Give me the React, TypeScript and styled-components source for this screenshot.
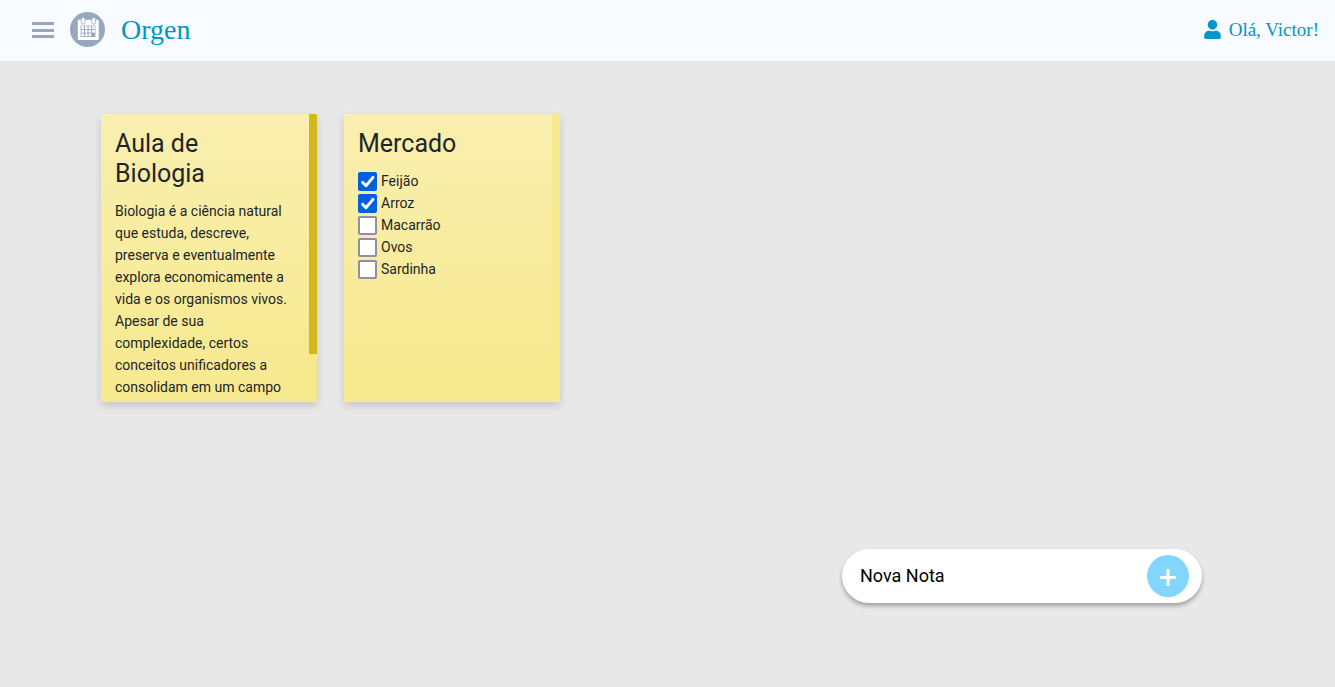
import React, { useEffect, useRef, useState } from "react";
import styled, { createGlobalStyle } from "styled-components";
import { FaUser } from "react-icons/fa";

const GlobalStyle = createGlobalStyle`
  *, *::before, *::after { box-sizing: border-box; }
  body {
    margin: 0;
    background: #e8e8e8;
    color: #212529;
    font-family: Roboto, "Liberation Sans", sans-serif;
    font-size: 14px;
  }
`;

const Page = styled.div`
  display: flex;
  flex-direction: column;
  min-height: 100vh;
`;

const Header = styled.header`
  display: flex;
  align-items: center;
  height: 61px;
  padding: 0 16px 2px 32px;
  background: #f8fbff;
  color: #0096c7;
  font-family: "Liberation Serif", serif;
`;

const MenuButton = styled.button`
  display: flex;
  flex-direction: column;
  justify-content: space-between;
  width: 22px;
  height: 16px;
  margin: 1px 16px 0 0;
  padding: 0;
  border: 0;
  background: none;
  cursor: pointer;
`;

const MenuBar = styled.span`
  height: 3px;
  background: #98a7bc;
`;

const Logo = styled.svg`
  width: 35px;
  height: 35px;
  margin-right: 16px;
`;

const Brand = styled.a`
  display: flex;
  align-items: center;
  color: inherit;
  font-size: 28px;
  line-height: 36px;
  text-decoration: none;
`;

const UserLink = styled.a`
  display: flex;
  align-items: center;
  gap: 8px;
  margin-left: auto;
  color: inherit;
  font-size: 19px;
  line-height: 24px;
  text-decoration: none;

  svg {
    width: 17px;
    height: 19px;
  }
`;

const Main = styled.main`
  display: flex;
  flex: 1;
  flex-direction: column;
  justify-content: space-between;
  gap: 40px;
  padding: 53px 133px 84px 101px;
`;

const Board = styled.section`
  display: flex;
  flex-wrap: wrap;
  gap: 27px;
`;

const Card = styled.article`
  display: flex;
  width: 216px;
  height: 288px;
  overflow: hidden;
  border-radius: 2px;
  background: linear-gradient(#f9efaf, #f7e98d);
  box-shadow: 0 4px 8px rgba(0, 0, 0, 0.15);
`;

const CardBody = styled.div`
  flex: 1;
  min-width: 0;
  padding: 15px 18px 24px 14px;
  overflow-y: auto;
  scrollbar-width: none;
`;

const Rail = styled.div`
  flex: none;
  width: 8px;
  background: #f7e98d;
`;

const Thumb = styled.div`
  background: #d1b81e;
`;

const Title = styled.h2`
  margin: 0 0 11px;
  font-size: 25px;
  font-weight: 400;
  line-height: 30px;
`;

const Text = styled.p`
  margin: 0 0 16px;
  font-size: 14px;
  line-height: 22px;
`;

const List = styled.ul`
  margin: 0;
  padding: 0;
  list-style: none;
`;

const Item = styled.label`
  display: flex;
  align-items: center;
  gap: 4px;
  height: 22px;
  line-height: 22px;
`;

const CheckBox = styled.span`
  display: grid;
  width: 19px;
  height: 19px;

  > * { grid-area: 1 / 1; }

  svg {
    display: none;
    width: 19px;
    height: 19px;
    pointer-events: none;
  }

  input:checked + svg { display: block; }
`;

const CheckInput = styled.input`
  width: 19px;
  height: 19px;
  margin: 0;
  appearance: none;
  border: 2px solid #8f8f9d;
  border-radius: 2px;
  background: #fff;

  &:checked {
    border-color: #0060df;
    background: #0060df;
  }
`;

const NewNote = styled.form`
  display: flex;
  align-items: center;
  align-self: flex-end;
  width: 360px;
  max-width: 100%;
  height: 54px;
  padding: 0 13px 0 18px;
  border-radius: 27px;
  background: #fff;
  box-shadow: 0 3px 4px rgba(0, 0, 0, 0.3);
`;

const NoteInput = styled.input`
  flex: 1;
  min-width: 0;
  padding: 0;
  border: 0;
  outline: 0;
  background: none;
  color: #000;
  font: 18px/24px Roboto, "Liberation Sans", sans-serif;

  &::placeholder {
    color: #000;
    opacity: 1;
  }
`;

const AddButton = styled.button`
  display: flex;
  align-items: center;
  justify-content: center;
  width: 42px;
  height: 42px;
  padding: 2px 0 0;
  border: 0;
  border-radius: 50%;
  background: #82d5fb;
  cursor: pointer;
`;

function Note({ title, children }: { title: string; children: React.ReactNode }) {
  const body = useRef<HTMLDivElement>(null);
  const [thumb, setThumb] = useState({ size: 1, start: 0 });

  const measure = () => {
    const el = body.current;
    if (!el) return;
    setThumb({
      size: el.clientHeight / el.scrollHeight,
      start: el.scrollTop / el.scrollHeight,
    });
  };

  useEffect(measure, []);

  return (
    <Card>
      <CardBody ref={body} onScroll={measure}>
        <Title>{title}</Title>
        {children}
      </CardBody>
      <Rail aria-hidden="true">
        {thumb.size < 1 && (
          <Thumb
            style={{
              height: `${thumb.size * 100}%`,
              transform: `translateY(${(thumb.start / thumb.size) * 100}%)`,
            }}
          />
        )}
      </Rail>
    </Card>
  );
}

const groceries = [
  { name: "Feijão", done: true },
  { name: "Arroz", done: true },
  { name: "Macarrão", done: false },
  { name: "Ovos", done: false },
  { name: "Sardinha", done: false },
];

function CalendarLogo() {
  return (
    <Logo viewBox="0 0 35 35" aria-hidden="true">
      <circle cx="17.5" cy="17.5" r="17.5" fill="#98a7bc" />
      <rect x="7.8" y="7.8" width="21" height="20.2" rx="1" fill="#fff" />
      <g fill="#fff" stroke="#98a7bc" strokeWidth="0.8">
        <rect x="11.2" y="5.6" width="3.8" height="6.4" rx="1.6" />
        <rect x="21.8" y="5.6" width="3.8" height="6.4" rx="1.6" />
      </g>
      <rect x="10.6" y="13.6" width="14.8" height="11.4" fill="#98a7bc" />
      <g fill="#fff">
        {[14.3, 17.9, 21.5].map((y, row) =>
          [11.4, 15, 18.6, 22.2].map((x, col) =>
            row === 2 && col === 3 ? null : (
              <rect key={`${x}-${y}`} x={x} y={y} width="2.6" height="2.7" />
            )
          )
        )}
      </g>
    </Logo>
  );
}

export default function App() {
  return (
    <Page>
      <GlobalStyle />
      <Header>
        <MenuButton type="button" aria-label="Menu">
          <MenuBar />
          <MenuBar />
          <MenuBar />
        </MenuButton>
        <Brand href="#">
          <CalendarLogo />
          Orgen
        </Brand>
        <UserLink href="#">
          <FaUser aria-hidden="true" />
          Olá, Victor!
        </UserLink>
      </Header>
      <Main>
        <Board>
          <Note title="Aula de Biologia">
            <Text>
              Biologia é a ciência natural que estuda, descreve, preserva e
              eventualmente explora economicamente a vida e os organismos vivos.
              Apesar de sua complexidade, certos conceitos unificadores a
              consolidam em um campo único.
            </Text>
          </Note>
          <Note title="Mercado">
            <List>
              {groceries.map(({ name, done }) => (
                <li key={name}>
                  <Item>
                    <CheckBox>
                      <CheckInput type="checkbox" defaultChecked={done} />
                      <svg viewBox="0 0 19 19" aria-hidden="true">
                        <path
                          d="M4.6 10.4 8 13.8 15 5.4"
                          fill="none"
                          stroke="#fff"
                          strokeWidth="2.9"
                          strokeLinecap="round"
                          strokeLinejoin="round"
                        />
                      </svg>
                    </CheckBox>
                    {name}
                  </Item>
                </li>
              ))}
            </List>
          </Note>
        </Board>
        <NewNote onSubmit={(event) => event.preventDefault()}>
          <NoteInput aria-label="Nova Nota" placeholder="Nova Nota" />
          <AddButton type="submit" aria-label="Adicionar nota">
            <svg width="16" height="17" viewBox="0 0 16 17" aria-hidden="true">
              <path d="M8 0v17M0 8.5h16" fill="none" stroke="#fff" strokeWidth="3" />
            </svg>
          </AddButton>
        </NewNote>
      </Main>
    </Page>
  );
}
